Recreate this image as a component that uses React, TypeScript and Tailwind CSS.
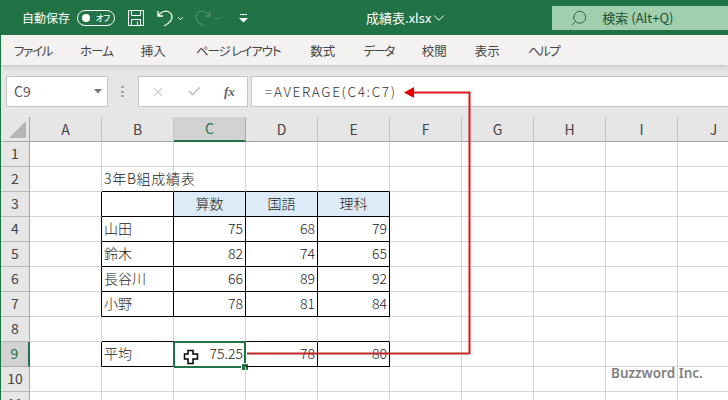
import { ChevronDown, Search, Check, X } from "lucide-react"

const font = "font-['Noto_Sans_CJK_JP','Noto_Sans',sans-serif] [font-feature-settings:'palt']"

const tabs = [
  { label: "ファイル", className: "tracking-[-1.3px]" },
  { label: "ホーム", className: "tracking-[-1px]" },
  { label: "挿入", className: "" },
  { label: "ページ レイアウト", className: "ml-[2px] tracking-[-1.1px]" },
  { label: "数式", className: "ml-[2px]" },
  { label: "データ", className: "tracking-[-1.5px]" },
  { label: "校閲", className: "" },
  { label: "表示", className: "" },
  { label: "ヘルプ", className: "tracking-[-1.5px]" },
]
const columns = ["A", "B", "C", "D", "E", "F", "G", "H", "I", "J"]

type CellDef = { text?: string; right?: boolean; head?: boolean; boxed?: boolean }

// only the cells with something in them, everything else is plain grid
const cells: Record<string, CellDef> = {
  B2: { text: "3年B組成績表" },
  B3: { boxed: true },
  C3: { text: "算数", head: true, boxed: true },
  D3: { text: "国語", head: true, boxed: true },
  E3: { text: "理科", head: true, boxed: true },
  B4: { text: "山田", boxed: true },
  C4: { text: "75", right: true, boxed: true },
  D4: { text: "68", right: true, boxed: true },
  E4: { text: "79", right: true, boxed: true },
  B5: { text: "鈴木", boxed: true },
  C5: { text: "82", right: true, boxed: true },
  D5: { text: "74", right: true, boxed: true },
  E5: { text: "65", right: true, boxed: true },
  B6: { text: "長谷川", boxed: true },
  C6: { text: "66", right: true, boxed: true },
  D6: { text: "89", right: true, boxed: true },
  E6: { text: "92", right: true, boxed: true },
  B7: { text: "小野", boxed: true },
  C7: { text: "78", right: true, boxed: true },
  D7: { text: "81", right: true, boxed: true },
  E7: { text: "84", right: true, boxed: true },
  B9: { text: "平均", boxed: true },
  C9: { text: "75.25", right: true, boxed: true },
  D9: { text: "78", right: true, boxed: true },
  E9: { text: "80", right: true, boxed: true },
}

const Cell = ({ col, row }: { col: string; row: number }) => {
  const id = col + row
  const cell = cells[id]
  const below = cells[col + (row + 1)]
  const next = cells[columns[columns.indexOf(col) + 1] + row]
  const blackBottom = cell?.boxed || below?.boxed
  const blackRight = cell?.boxed || next?.boxed
  return (
    <div
      className={`relative h-[25px] w-[72px] shrink-0 border-r border-b pb-[2px] pl-[2px] pr-[2px] flex items-center whitespace-nowrap text-[14px] font-light text-[#222] ${
        blackBottom ? "border-b-black" : "border-b-[#d4d4d4]"
      } ${blackRight ? "border-r-black" : "border-r-[#d4d4d4]"} ${cell?.head ? "bg-[#ddebf7] justify-center" : ""} ${
        cell?.right ? "justify-end" : ""
      } ${id === "B2" ? "tracking-[0.7px]" : ""}`}
    >
      {cell?.text}
      {id === "C9" && (
        <div className="absolute -left-px -top-px h-[27px] w-[73px] border-2 border-[#217346]">
          <div className="absolute -bottom-[5px] -right-[5px] h-[8px] w-[8px] border border-white bg-[#217346]" />
        </div>
      )}
    </div>
  )
}

const Row = ({ row }: { row: number }) => {
  const selected = row === 9
  return (
    <div className="flex">
      <div
        className={`flex h-[25px] w-[29px] shrink-0 items-center justify-center border-b border-r pb-px text-[14px] ${
          selected
            ? "border-b-[#ababab] border-r-2 border-r-[#217346] bg-[#d2d2d2] text-[#217346]"
            : "border-b-[#b8b8b8] border-r-[#a6a6a6] bg-[#e6e6e6] text-[#444]"
        }`}
      >
        {row}
      </div>
      {columns.map((col) => (
        <Cell key={col} col={col} row={row} />
      ))}
    </div>
  )
}

const App = () => {
  return (
    <div className={`relative h-[400px] w-[728px] overflow-hidden border-l border-l-[#217346] bg-white ${font}`}>
      {/* title bar */}
      <div className="-ml-px flex h-[35px] items-center bg-[#217346] text-white">
        <span className="ml-[22px] text-[12px]">自動保存</span>
        <div className="ml-[7px] flex h-[16px] w-[38px] items-center justify-between rounded-full border border-white px-[4px]">
          <div className="h-[8px] w-[8px] rounded-full bg-white" />
          <span className="text-[8px] font-medium">オフ</span>
        </div>
        <svg className="ml-[13px]" width="16" height="16" viewBox="0 0 16 16" fill="none" stroke="#fff" strokeWidth="1">
          <path d="M.5.5h15v15H.5z" />
          <path d="M3.5.5v5h9v-5M3.5 15.5v-6h9v6M9.5 11.5v4" />
        </svg>
        <svg className="ml-[13px]" width="17" height="18" viewBox="0 0 17 18" fill="none" stroke="#fff" strokeWidth="1.3">
          <path d="M1 2v5h5M1.5 6.5 C4 3 8 1.5 11 2.5 C15 4 16 8 14 11 C13 13 10 15.5 7 17" />
        </svg>
        <ChevronDown className="ml-[2px] mt-[1px]" size={9} strokeWidth={2.5} />
        <svg className="ml-[9px]" width="17" height="18" viewBox="0 0 17 18" fill="none" stroke="#4f9069" strokeWidth="1.3">
          <path d="M16 2v5h-5M15.5 6.5 C13 3 9 1.5 6 2.5 C2 4 1 8 3 11 C4 13 7 15.5 10 17" />
        </svg>
        <ChevronDown className="ml-[2px] mt-[1px] text-[#4f9069]" size={9} strokeWidth={2.5} />
        <svg className="ml-[17px] mt-[1px]" width="9" height="9" viewBox="0 0 9 9" fill="#fff">
          <path d="M1 0h7v1H1zM0 4h9L4.500 8.500z" />
        </svg>
        <span className="ml-[118px] text-[13px] whitespace-nowrap">成績表.xlsx</span>
        <ChevronDown className="-ml-px" size={18} strokeWidth={1.3} />
        <div className="ml-[104px] mt-[6px] flex h-[24px] flex-1 items-center self-start bg-[#a0cfae] text-[#1f4f33]">
          <Search className="ml-[18px] -scale-x-100" size={18} strokeWidth={1.1} />
          <span className="ml-[14px] text-[13px] whitespace-nowrap">検索 (Alt+Q)</span>
        </div>
      </div>

      {/* ribbon tabs */}
      <div className="relative z-10 -ml-px flex h-[30px] items-center gap-7 bg-[#f3f2f1] pl-[14px] pt-[2px] text-[12.5px] text-[#444] shadow-[0_2px_5px_rgba(0,0,0,0.15)]">
        {tabs.map((tab) => (
          <span key={tab.label} className={`whitespace-nowrap ${tab.className}`}>
            {tab.label}
          </span>
        ))}
      </div>

      {/* formula bar */}
      <div className="flex h-[52px] items-start bg-[#e6e6e6] pt-[11px]">
        <div className="ml-[5px] flex h-[31px] w-[102px] items-center justify-between border border-[#c6c6c6] bg-white pl-[7px] pr-[5px] text-[14px] text-[#555]">
          C9
          <svg width="8" height="5" viewBox="0 0 8 5" fill="#777">
            <path d="M0 0h8L4 4.500z" />
          </svg>
        </div>
        <div className="ml-[13px] mt-[10px] flex h-[11px] w-[3px] flex-col justify-between">
          <div className="h-[2px] bg-[#a8a8a8]" />
          <div className="h-[2px] bg-[#a8a8a8]" />
          <div className="h-[2px] bg-[#a8a8a8]" />
        </div>
        <div className="ml-[14px] flex h-[31px] w-[110px] items-center border border-[#c6c6c6] bg-white pl-[12px] text-[#bdbdbd]">
          <X size={14} strokeWidth={1.8} />
          <Check className="ml-[22px]" size={15} strokeWidth={2.4} />
          <span className="ml-[22px] font-['Liberation_Serif',serif] text-[13px] font-bold italic text-[#666]">fx</span>
        </div>
        <div className="ml-[3px] flex h-[31px] flex-1 items-center border-y border-l border-[#c6c6c6] bg-white pl-[13px] text-[13.5px] font-light tracking-[1.7px] text-[#333]">
          =AVERAGE(C4:C7)
        </div>
      </div>

      {/* column headers */}
      <div className="flex h-[25px]">
        <div className="flex w-[29px] shrink-0 items-end justify-end border-b border-r border-[#a6a6a6] bg-[#e6e6e6] pb-[3px] pr-[3px]">
          <svg width="17" height="17" viewBox="0 0 17 17" fill="#b4b4b4">
            <path d="M17 0v17H0z" />
          </svg>
        </div>
        {columns.map((col) => (
          <div
            key={col}
            className={`flex w-[72px] shrink-0 items-center justify-center text-[14px] ${
              col === "C"
                ? "border-b-2 border-r border-b-[#217346] border-r-[#ababab] bg-[#d2d2d2] text-[#217346]"
                : "border-b border-r border-b-[#a6a6a6] border-r-[#c4c4c4] bg-[#e6e6e6] text-[#444]"
            }`}
          >
            {col}
          </div>
        ))}
      </div>

      {/* sheet */}
      {[1, 2, 3, 4, 5, 6, 7, 8, 9, 10, 11].map((row) => (
        <Row key={row} row={row} />
      ))}

      {/* annotation arrow */}
      <svg className="absolute -left-px top-0" width="728" height="400" viewBox="0 0 728 400" fill="none">
        <path d="M247 353.500H469.500" stroke="#c02828" strokeWidth="2" />
        <path d="M469.500 354V92.500H412" stroke="#d81818" strokeWidth="2" />
        <path d="M404 92.500l10-5.500v11z" fill="#e00000" />
      </svg>

      {/* cell cursor */}
      <svg className="absolute left-[182px] top-[349px]" width="16" height="16" viewBox="0 0 16 16">
        <path d="M5 1.500h5v3.500h4.500v5H10v4.500H5V10H1.500V5H5z" fill="#fff" stroke="#000" strokeWidth="1.500" />
      </svg>

      {/* watermark */}
      <span className="absolute left-[610px] top-[363px] font-['Noto_Sans',sans-serif] text-[13.5px] font-semibold text-[#808080] whitespace-nowrap">
        Buzzword Inc.
      </span>
    </div>
  )
}

export default App
